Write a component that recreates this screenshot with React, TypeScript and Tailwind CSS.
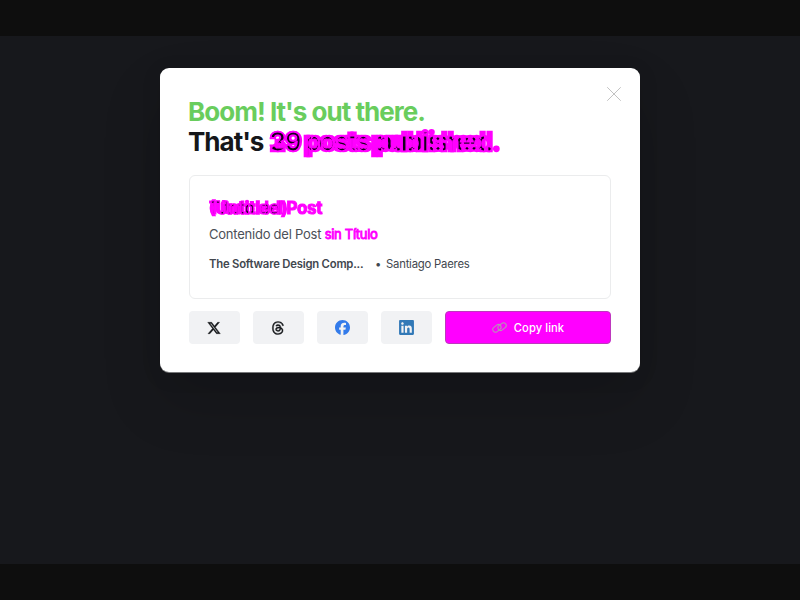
import React from "react";
import { X } from "lucide-react";
import { FaXTwitter, FaThreads, FaFacebook, FaLinkedin } from "react-icons/fa6";

const share = "flex h-[33px] w-[51px] items-center justify-center rounded bg-[#f1f2f4] pr-px";
const bold = "text-[#ff00ff] [-webkit-text-stroke:2.4px_#ff00ff]";

export default function App() {
  return (
    <main className="flex h-[600px] w-[800px] flex-col bg-[#17181c] font-['Inter',sans-serif] text-[#15171a]">
      <div className="h-9 shrink-0 bg-[#0e0e0e]" />
      <div className="flex min-h-0 flex-1 justify-center overflow-hidden pt-8">
        <section className="flex h-[304px] w-[480px] flex-col rounded-[9px] bg-white px-[29px] pt-[29px] shadow-[0_1px_0_#77787a,0_28px_60px_rgba(0,0,0,0.15),0_4px_20px_rgba(0,0,0,0.1)]">
          <header className="flex justify-between">
            <h1 className="-ml-px whitespace-nowrap text-[26px] font-bold leading-[30px] tracking-[-0.98px]">
              <span className="block text-[#69cd5d]">Boom! It's out there.</span>
              <span className="flex">
                <span className="mr-[6px]">That's</span>
                {/* Two revisions of the count, with their shared strokes kept dark */}
                <span className="relative isolate tracking-[-1.1px]">
                  <span className={`absolute left-0 top-0 tracking-[-1.28px] [word-spacing:-1.8px] ${bold}`}>29 posts published.</span>
                  <span className={`relative ${bold}`}>39 posts published.</span>
                  <span aria-hidden="true" className="absolute inset-0 isolate bg-white mix-blend-multiply [-webkit-text-stroke:1.1px_white]">
                    <span className="absolute left-0 top-0 bg-white tracking-[-1.28px] [word-spacing:-1.8px]">29 posts published.</span>
                    <span className="absolute left-0 top-0 bg-white mix-blend-lighten">39 posts published.</span>
                  </span>
                </span>
              </span>
            </h1>
            <button aria-label="Close" className="-mr-[13px] -mt-[13px] flex h-[20px] w-[20px] items-center justify-center text-[#b8b8b8]">
              <X size={26} strokeWidth={0.8} className="shrink-0" />
            </button>
          </header>
          <article className="mt-[18px] h-[124px] w-[422px] shrink-0 rounded-md border border-[#ebeced] px-[19px] pt-5">
            <h2 className="flex h-6 whitespace-nowrap text-[17px] font-bold leading-6 tracking-[-0.35px]">
              <span className="relative isolate">
                <span className="absolute left-0 top-0 tracking-[0px] text-[#ff00ff] [-webkit-text-stroke:1.6px_#ff00ff]">(Untitled)</span>
                <span className="relative text-[#ff00ff] [-webkit-text-stroke:1px_#ff00ff]">Título del Post</span>
                <span aria-hidden="true" className="absolute inset-0 isolate bg-white mix-blend-multiply [-webkit-text-stroke:0.8px_white]">
                  <span className="absolute inset-0 bg-white tracking-[0px]">(Untitled)</span>
                  <span className="absolute inset-0 bg-white mix-blend-lighten">Título del Post</span>
                </span>
              </span>
            </h2>
            <p className="mt-1 whitespace-nowrap text-[13px] leading-5 tracking-[-0.23px] text-[#4b5057]">Contenido del Post <span className="tracking-[-0.3px] text-[#ff00ff] [-webkit-text-stroke:0.9px_#ff00ff]">sin Título</span></p>
            <p className="mt-[11px] flex whitespace-nowrap text-[11.3px] leading-[18px] tracking-[-0.21px] text-[#42474e]">
              <strong className="w-[166px] font-semibold">The Software Design Comp...</strong><span className="w-[6px]">•</span><span className="ml-[5px]">Santiago Paeres</span>
            </p>
          </article>
          <div className="mt-3 flex gap-[13px]">
            <button className={share}><FaXTwitter size={14} stroke="#15171a" strokeWidth={14} /></button>
            <button className={share}><FaThreads size={14} stroke="#15171a" strokeWidth={14} /></button>
            <button className={share}><FaFacebook size={15} color="#337bea" /></button>
            <button className={share}><FaLinkedin size={17} color="#3279b7" /></button>
            <button className="flex h-[33px] w-[166px] items-center justify-center gap-[7px] rounded border border-[#bd38bd] bg-[#ff00ff] text-[11.2px] font-medium tracking-[0.08px] text-white">
              <svg width="15" height="13" viewBox="0 0 15 13" fill="none" stroke="#b09caf" strokeWidth="1"><rect x="0.4" y="4.6" width="9" height="5.4" rx="2.7" transform="rotate(-38 5 7.3)" /><rect x="5.6" y="3" width="9" height="5.4" rx="2.7" transform="rotate(-38 10 5.7)" /></svg>
              <span className="pt-px">Copy link</span>
            </button>
          </div>
        </section>
      </div>
      <div className="h-9 shrink-0 bg-[#0e0e0e]" />
    </main>
  );
}
